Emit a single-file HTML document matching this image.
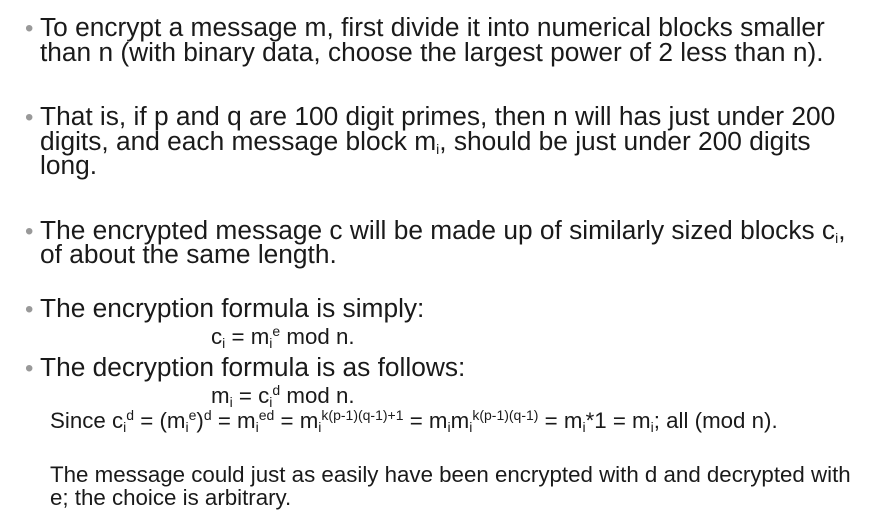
<!DOCTYPE html>
<html><head><meta charset="utf-8"><style>
body{margin:0;width:877px;height:526px;background:#fff;overflow:hidden;font-family:"Liberation Sans",Arial,sans-serif;color:#1a1a1a;position:relative}
.l{position:absolute;left:40px;font-size:26.3px;line-height:28px;white-space:nowrap}
.b{position:absolute;left:25px;font-size:24px;color:#999;line-height:28px;margin-top:2px}
.s{position:absolute;font-size:22.3px;line-height:24px;white-space:nowrap}
sub,sup{font-size:14px;line-height:0}
sub{vertical-align:-4px}
sup{vertical-align:8px}
</style></head><body>
<div class="b" style="top:13px">•</div>
<div class="l" style="top:13px">To encrypt a message m, first divide it into numerical blocks smaller</div>
<div class="l" style="top:38px">than n (with binary data, choose the largest power of 2 less than n).</div>
<div class="b" style="top:102px">•</div>
<div class="l" style="top:102px">That is, if p and q are 100 digit primes, then n will has just under 200</div>
<div class="l" style="top:127px">digits, and each message block m<sub>i</sub>, should be just under 200 digits</div>
<div class="l" style="top:151px">long.</div>
<div class="b" style="top:216px">•</div>
<div class="l" style="top:216px">The encrypted message c will be made up of similarly sized blocks c<sub>i</sub>,</div>
<div class="l" style="top:240px">of about the same length.</div>
<div class="b" style="top:294px">•</div>
<div class="l" style="top:294px">The encryption formula is simply:</div>
<div class="s" style="left:211px;top:325px">c<sub>i</sub> = m<sub>i</sub><sup>e</sup> mod n.</div>
<div class="b" style="top:353px">•</div>
<div class="l" style="top:353px">The decryption formula is as follows:</div>
<div class="s" style="left:211px;top:384px">m<sub>i</sub> = c<sub>i</sub><sup>d</sup> mod n.</div>
<div class="s" style="left:50px;top:409px">Since c<sub>i</sub><sup>d</sup> = (m<sub>i</sub><sup>e</sup>)<sup>d</sup> = m<sub>i</sub><sup>ed</sup> = m<sub>i</sub><sup>k(p-1)(q-1)+1</sup> = m<sub>i</sub>m<sub>i</sub><sup>k(p-1)(q-1)</sup> = m<sub>i</sub>*1 = m<sub>i</sub>; all (mod n).</div>
<div class="s" style="left:50px;top:463px">The message could just as easily have been encrypted with d and decrypted with</div>
<div class="s" style="left:50px;top:486px">e; the choice is arbitrary.</div>
</body></html>
